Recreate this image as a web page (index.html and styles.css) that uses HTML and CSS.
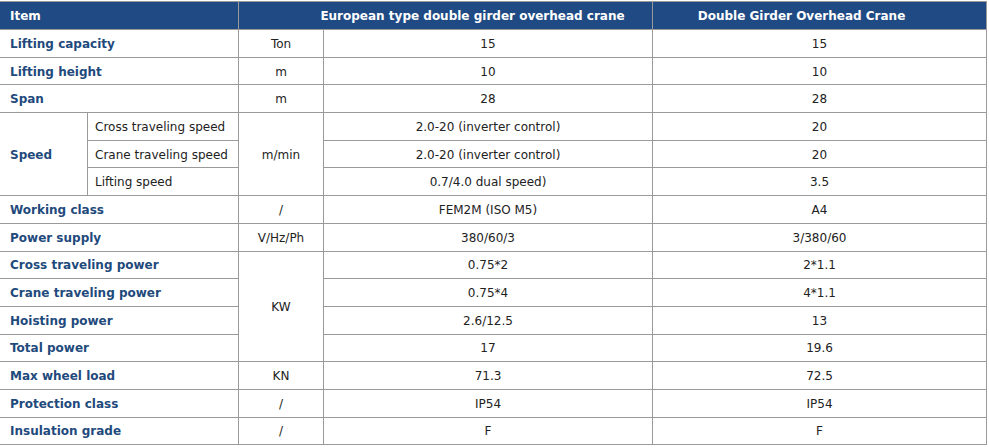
FILE: index.html
```html
<!DOCTYPE html>
<html>
<head>
<meta charset="utf-8">
<link rel="stylesheet" href="styles.css">
</head>
<body>
<table class="spec">
  <colgroup>
    <col class="c-a"><col class="c-b"><col class="c-c"><col class="c-d"><col class="c-e">
  </colgroup>
  <tr class="head">
    <th colspan="2" class="h-item">Item</th>
    <th colspan="2" class="h-eu">European type double girder overhead crane</th>
    <th class="h-dg">Double Girder Overhead Crane</th>
  </tr>
  <tr><td colspan="2" class="lbl">Lifting capacity</td><td class="unit">Ton</td><td class="val">15</td><td class="val">15</td></tr>
  <tr><td colspan="2" class="lbl">Lifting height</td><td class="unit">m</td><td class="val">10</td><td class="val">10</td></tr>
  <tr><td colspan="2" class="lbl">Span</td><td class="unit">m</td><td class="val">28</td><td class="val">28</td></tr>
  <tr><td rowspan="3" class="lbl">Speed</td><td class="sub">Cross traveling speed</td><td rowspan="3" class="unit">m/min</td><td class="val">2.0-20 (inverter control)</td><td class="val">20</td></tr>
  <tr><td class="sub">Crane traveling speed</td><td class="val">2.0-20 (inverter control)</td><td class="val">20</td></tr>
  <tr><td class="sub">Lifting speed</td><td class="val">0.7/4.0 dual speed)</td><td class="val">3.5</td></tr>
  <tr><td colspan="2" class="lbl">Working class</td><td class="unit">/</td><td class="val">FEM2M (ISO M5)</td><td class="val">A4</td></tr>
  <tr><td colspan="2" class="lbl">Power supply</td><td class="unit">V/Hz/Ph</td><td class="val">380/60/3</td><td class="val">3/380/60</td></tr>
  <tr><td colspan="2" class="lbl">Cross traveling power</td><td rowspan="4" class="unit">KW</td><td class="val">0.75*2</td><td class="val">2*1.1</td></tr>
  <tr><td colspan="2" class="lbl">Crane traveling power</td><td class="val">0.75*4</td><td class="val">4*1.1</td></tr>
  <tr><td colspan="2" class="lbl">Hoisting power</td><td class="val">2.6/12.5</td><td class="val">13</td></tr>
  <tr><td colspan="2" class="lbl">Total power</td><td class="val">17</td><td class="val">19.6</td></tr>
  <tr><td colspan="2" class="lbl">Max wheel load</td><td class="unit">KN</td><td class="val">71.3</td><td class="val">72.5</td></tr>
  <tr><td colspan="2" class="lbl">Protection class</td><td class="unit">/</td><td class="val">IP54</td><td class="val">IP54</td></tr>
  <tr><td colspan="2" class="lbl">Insulation grade</td><td class="unit">/</td><td class="val">F</td><td class="val">F</td></tr>
</table>
</body>
</html>
```

FILE: styles.css
```css
html, body {
  margin: 0;
  padding: 0;
  background: #ffffff;
}
body {
  font-family: "DejaVu Sans", Verdana, sans-serif;
  font-size: 12px;
  color: #222222;
}
.spec {
  border-collapse: collapse;
  table-layout: fixed;
  width: 987px;
  margin: 1px 0 0 -1px;
}
.c-a { width: 88px; }
.c-b { width: 151px; }
.c-c { width: 85px; }
.c-d { width: 329px; }
.c-e { width: 334px; }
.spec td, .spec th {
  border: 1px solid #9a9a9a;
  height: 25.7px;
  padding: 1px 0 0 0;
  vertical-align: middle;
}
.spec .head th {
  background: #1f4a84;
  color: #ffffff;
  font-weight: bold;
  height: 27px;
  padding-top: 0;
}
.spec .h-item { text-align: left; padding-left: 10px; }
.spec .h-eu { text-align: center; padding-left: 54px; }
.spec .h-dg { text-align: center; padding-right: 36px; }
.spec .lbl {
  color: #1f4a7c;
  font-weight: bold;
  text-align: left;
  padding-left: 10px;
}
.spec .sub {
  text-align: left;
  padding-left: 7px;
}
.spec .unit, .spec .val {
  text-align: center;
}
```
